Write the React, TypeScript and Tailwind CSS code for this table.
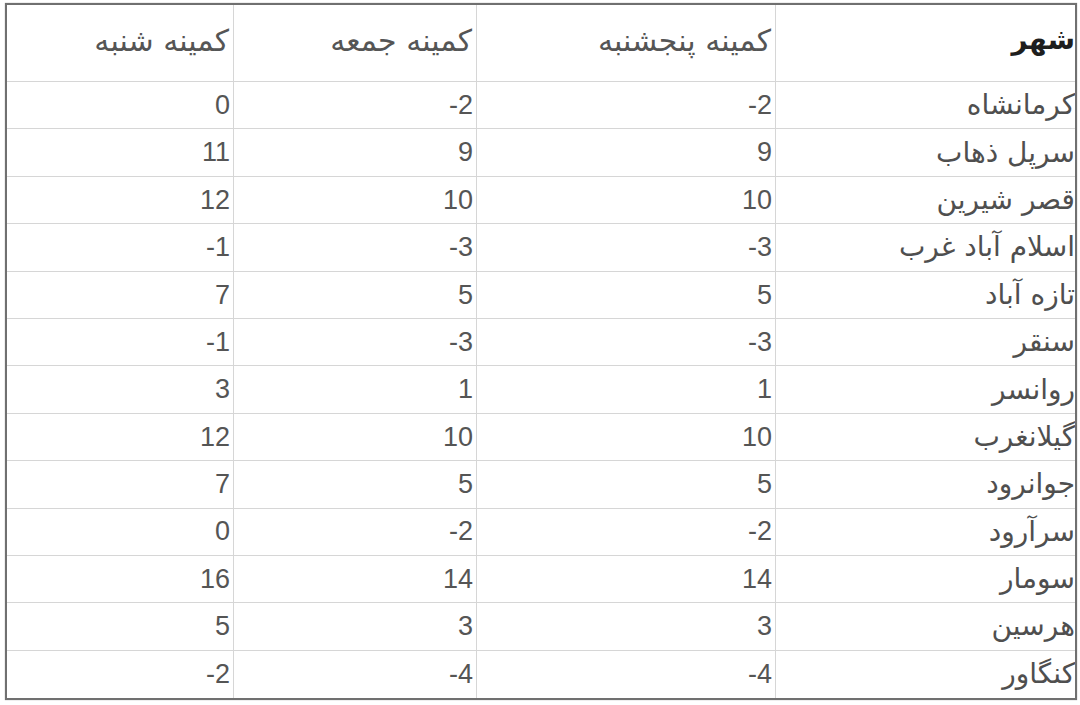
import React from "react";

const rows: [string, string, string, string][] = [
  ["کرمانشاه", "-2", "-2", "0"],
  ["سرپل ذهاب", "9", "9", "11"],
  ["قصر شیرین", "10", "10", "12"],
  ["اسلام آباد غرب", "-3", "-3", "-1"],
  ["تازه آباد", "5", "5", "7"],
  ["سنقر", "-3", "-3", "-1"],
  ["روانسر", "1", "1", "3"],
  ["گیلانغرب", "10", "10", "12"],
  ["جوانرود", "5", "5", "7"],
  ["سرآرود", "-2", "-2", "0"],
  ["سومار", "14", "14", "16"],
  ["هرسین", "3", "3", "5"],
  ["کنگاور", "-4", "-4", "-2"],
];

const fa = "font-['DejaVu_Sans','Noto_Sans',sans-serif]";
const num = "font-['Liberation_Sans',Arial,sans-serif]";

export default function App() {
  return (
    <div className="w-[1080px] h-[705px] bg-white pt-[3px] pl-[5px]">
      <div
        dir="rtl"
        className="w-[1072px] border-2 border-[#707070] bg-white shadow-[0_0_1px_rgba(0,0,0,0.4)]"
      >
        <div className="grid grid-cols-[300px_299px_243px_226px] h-[77px] border-b border-[#d6d6d6]">
          <div className={`flex items-center justify-start pr-0 pb-[6px] border-l border-[#d6d6d6] text-[28px] text-[#1e1e1e] font-semibold ${fa}`}>
            شهر
          </div>
          <div className={`flex items-center justify-start pr-[4px] pb-[6px] border-l border-[#d6d6d6] text-[30px] text-[#555] ${fa}`}>
            کمینه پنجشنبه
          </div>
          <div className={`flex items-center justify-start pr-[4px] pb-[6px] border-l border-[#d6d6d6] text-[30px] text-[#555] ${fa}`}>
            کمینه جمعه
          </div>
          <div className={`flex items-center justify-start pr-[4px] pb-[6px] text-[30px] text-[#555] ${fa}`}>
            کمینه شنبه
          </div>
        </div>
        {rows.map((r, i) => (
          <div
            key={i}
            className={`grid grid-cols-[300px_299px_243px_226px] h-[47.4px] ${
              i < rows.length - 1 ? "border-b border-[#d6d6d6]" : ""
            }`}
          >
            <div className={`flex items-center justify-start border-l border-[#d6d6d6] text-[28px] text-[#4f4f4f] overflow-hidden whitespace-nowrap ${fa}`}>
              {r[0]}
            </div>
            {[r[1], r[2], r[3]].map((v, j) => (
              <div
                key={j}
                dir="ltr"
                className={`flex items-center justify-end pr-[3px] text-[27px] text-[#555] ${num} ${
                  j < 2 ? "border-l border-[#d6d6d6]" : ""
                }`}
              >
                {v}
              </div>
            ))}
          </div>
        ))}
      </div>
    </div>
  );
}
